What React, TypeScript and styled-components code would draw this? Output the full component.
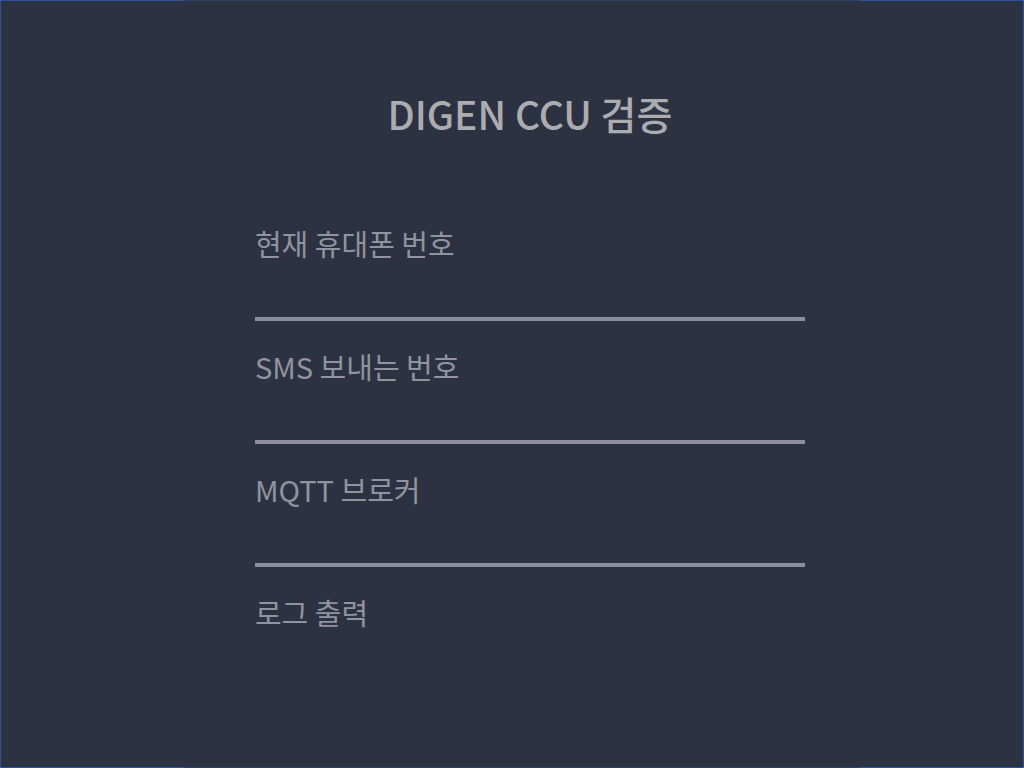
import React from 'react';
import styled, { createGlobalStyle } from 'styled-components';

const GlobalStyle = createGlobalStyle`
  * { box-sizing: border-box; }
  body {
    margin: 0;
    background: #2d3242;
    font-family: "Noto Sans CJK KR", "Noto Sans", sans-serif;
  }
`;

const Window = styled.main`
  min-height: 100vh;
  padding: 82px 21.3% 82px 24.8%;
  border: 1px solid;
  border-image: linear-gradient(
    to right,
    #2b539a 18%,
    #2d4269 18%,
    #2d4269 84%,
    #2b539a 84%
  ) 1;
  color: #9093a0;
`;

const Title = styled.h1`
  margin: 0 0 79px;
  font-size: 39px;
  line-height: 60px;
  font-weight: 500;
  text-align: center;
  color: #abacb0;
`;

const Form = styled.form`
  display: flex;
  flex-direction: column;
  gap: 24px;
`;

const Field = styled.div`
  display: flex;
  flex-direction: column;
`;

const Label = styled.label`
  font-size: 29px;
  line-height: 42px;
`;

const Input = styled.input`
  width: 100%;
  height: 57px;
  padding: 0;
  border: 0;
  border-bottom: 4px solid #8b8f9d;
  border-radius: 0;
  outline: 0;
  background: transparent;
  color: inherit;
  font: inherit;
  font-size: 29px;
`;

const LogLabel = styled.h2`
  margin: 0;
  font-size: 29px;
  line-height: 42px;
  font-weight: 400;
`;

const fields = [
  { id: 'phone', label: '현재 휴대폰 번호' },
  { id: 'sms', label: 'SMS 보내는 번호' },
  { id: 'broker', label: 'MQTT 브로커' },
];

export default function App() {
  return (
    <>
      <GlobalStyle />
      <Window>
        <Title>DIGEN CCU 검증</Title>
        <Form>
          {fields.map(({ id, label }) => (
            <Field key={id}>
              <Label htmlFor={id}>{label}</Label>
              <Input id={id} name={id} type="text" />
            </Field>
          ))}
          <LogLabel>로그 출력</LogLabel>
        </Form>
      </Window>
    </>
  );
}
